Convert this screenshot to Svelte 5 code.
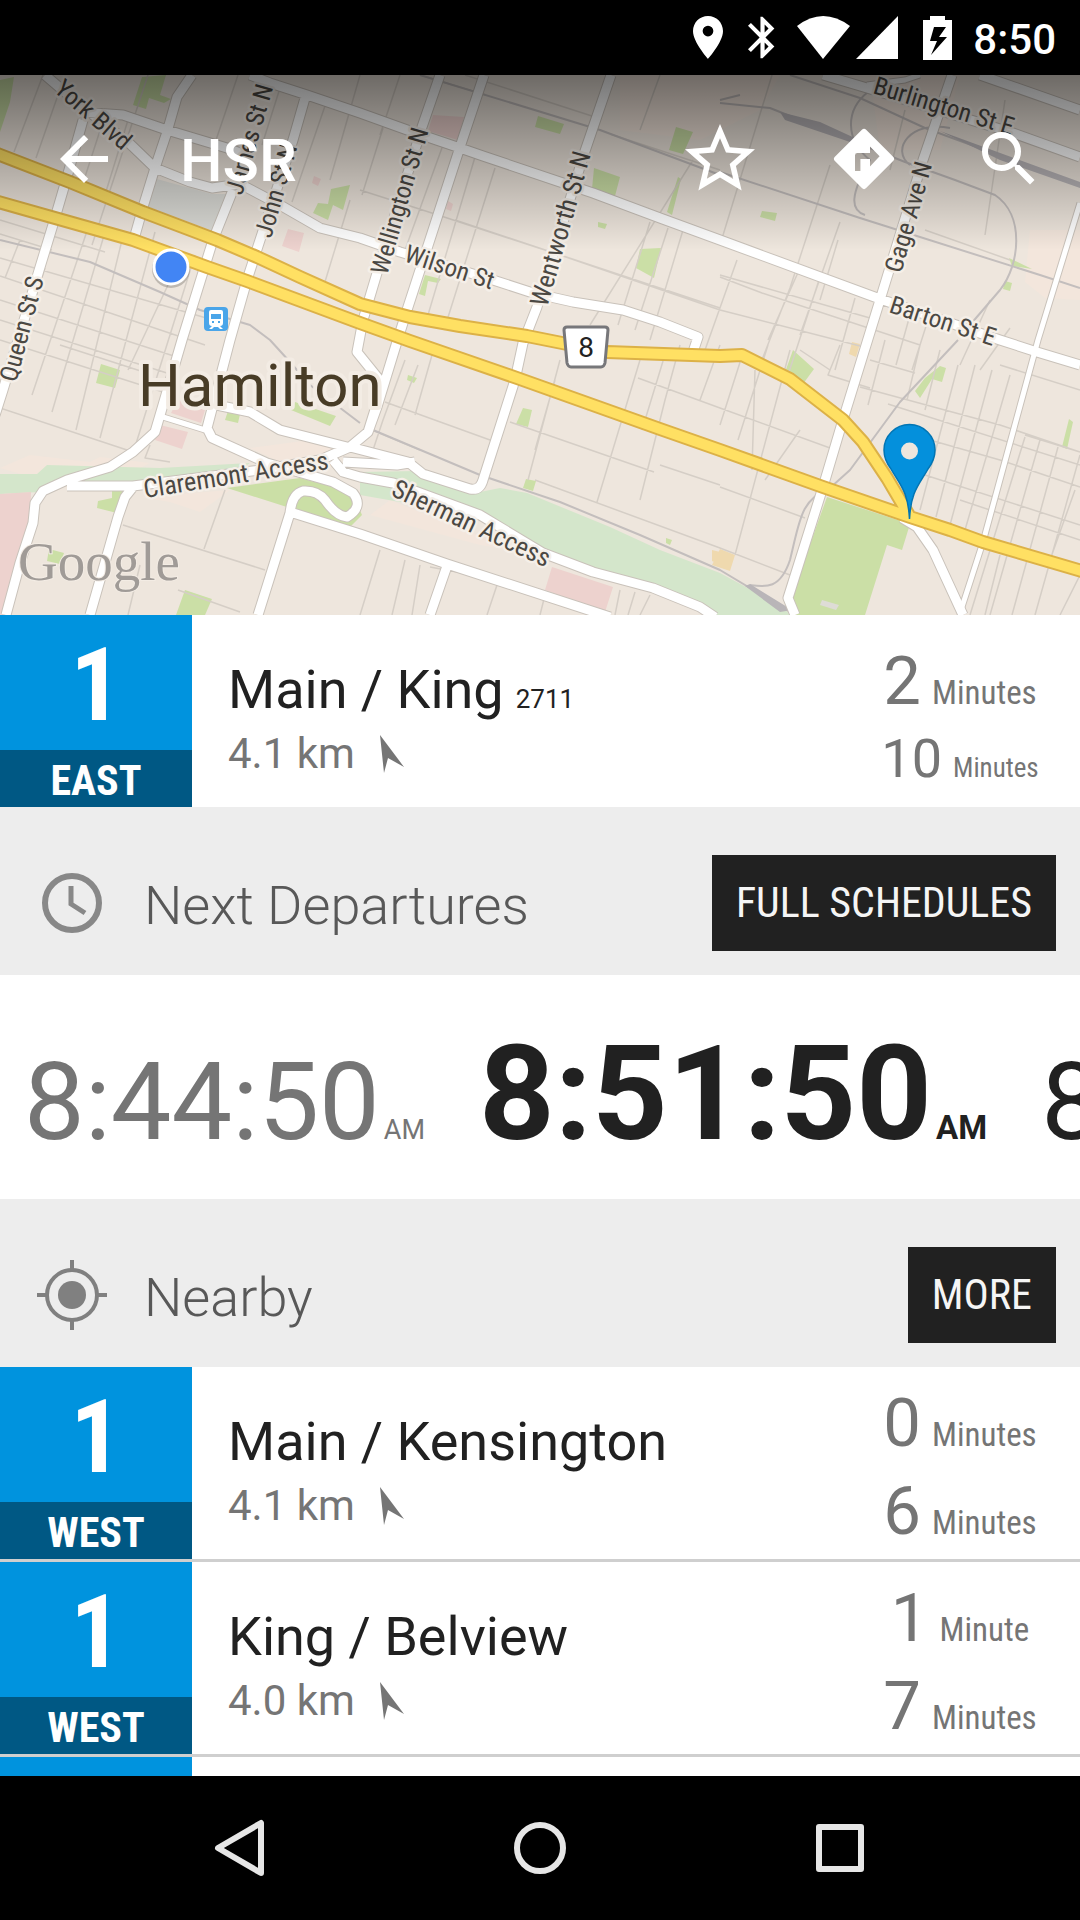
<script>
  const stop = { route: '1', heading: 'EAST', name: 'Main / King', code: '2711', distance: '4.1 km' }
  const arrivals = [
    { count: 2, unit: 'Minutes' },
    { count: 10, unit: 'Minutes', small: true }
  ]

  const departures = [
    { time: '8:44:50', state: 'past' },
    { time: '8:51:50', state: 'next' },
    { time: '8:58:50', state: 'later' }
  ]

  const nearby = [
    {
      route: '1',
      heading: 'WEST',
      name: 'Main / Kensington',
      distance: '4.1 km',
      arrivals: [{ count: 0, unit: 'Minutes' }, { count: 6, unit: 'Minutes' }]
    },
    {
      route: '1',
      heading: 'WEST',
      name: 'King / Belview',
      distance: '4.0 km',
      arrivals: [{ count: 1, unit: 'Minute' }, { count: 7, unit: 'Minutes' }]
    },
    { route: '', heading: '', name: '', distance: '', arrivals: [] }
  ]

  // map layers, drawn bottom to top
  const ravine = [
    'M0 474H37L47 465L160 468L250 463L230 476L140 482L67 484L40 492L0 494Z',
    'M360 472L417 471L480 492L500 488L527 493L610 527L660 550L720 573L783 607L790 615H710L653 588L573 563L480 517L400 502L360 495Z'
  ]
  const parks = [
    'M827 497L910 524L902 550L887 545L865 615H795L790 600Z',
    'M227 488L300 478L352 492L362 515L350 527L290 508Z',
    'M0 80L14 77L10 102L0 132Z',
    'M142 77L166 75L160 95L171 99L164 103L149 98L146 109L133 105Z',
    'M331 189L350 185L343 210L333 205L328 220L313 213L318 203L328 204Z',
    'M538 116L564 124L560 134L535 127Z',
    'M594 168L620 177L615 196L592 189Z',
    'M676 127L693 132L683 154L669 150Z',
    'M678 177L681 179L672 215L667 212Z',
    'M640 249L661 248L654 278L636 268Z',
    'M425 275L441 279L438 283L428 281L425 296L419 294Z',
    'M762 211L777 213L775 221L760 217Z',
    'M1009 258L1032 269L1012 266Z',
    'M1005 281L1012 283L1010 291L1003 289Z',
    'M101 364L120 370L115 388L96 383Z',
    'M228 411L240 414L238 423L225 420Z',
    'M295 402L336 416L330 426L291 410Z',
    'M112 490L123 491L117 513L97 508L98 501L112 498Z',
    'M49 549L64 553L60 564L47 561Z',
    'M185 590L212 599L205 615H176Z',
    'M523 408L532 410L528 427L516 424Z',
    'M526 479L536 481L533 491L523 488Z',
    'M793 350L814 369L803 384L784 375Z',
    'M940 366L946 368L942 382L932 379L920 398L915 391L925 378Z',
    'M1069 419L1073 422L1067 449L1062 447Z',
    'M408 375L417 378L414 383L407 380Z',
    'M598 222L607 224L605 229L598 227Z',
    'M666 538L672 540L670 545L666 543Z'
  ]
  const civic = [
    'M0 494L31 492L30 530L7 615H0Z',
    'M552 567L613 587L605 612L545 590Z',
    'M433 115L464 117L458 140L428 131Z',
    'M288 229L304 233L299 252L282 246Z',
    'M178 400L205 410L201 423L171 413Z',
    'M160 425L188 432L182 449L155 440Z',
    'M314 176L321 179L318 186L312 183Z',
    'M448 201L453 204L451 211L446 209Z'
  ]
  const sandy = ['M852 342L860 344L856 357L849 354Z', 'M720 549L735 555L730 571L712 565Z', 'M712 550L720 552V565L712 561Z']
  const pale = [
    'M620 75H780L760 110L700 140L620 130Z',
    'M870 75H960L940 150L880 150Z',
    'M1030 230H1080V300L1045 298L1025 282Z',
    'M0 468L30 455L90 462L100 457L150 463L140 468L47 467L35 478Z',
    'M250 448L310 440L340 450L280 462Z',
    'M140 497L230 490L200 512L170 502Z',
    'M370 515L390 500L520 552L480 545Z'
  ]
  const streets = [
    'M43 75L14 152M65 75L36 158M88 100L58 192M106 112L84 180M128 120L104 198M148 75L92 245M238 75L216 140M280 88L262 145M326 103L292 202M350 200L324 285M400 75L380 135',
    'M0 220L105 252M0 234L52 250M0 258L220 322M0 276L205 345M0 300L180 358M0 320L170 374M0 340L163 392M60 345L150 374M0 408L127 450',
    'M20 240L5 278M45 268L30 315M88 228L32 395M105 232L52 412M122 240L76 430M155 232L100 438M195 255L134 450M168 285L128 370',
    'M360 190L435 214L560 255L720 310L860 346M360 75L330 180M383 128L362 195M415 148L385 255M443 145L405 250M475 157L425 325M495 168L444 330M455 220L720 308',
    'M465 75L595 117M420 75L486 95M610 134L720 170M660 75L640 130M693 160L590 325M650 222L618 325M668 228L635 330M683 230L650 340M737 260L705 350M800 268L768 340M820 277L788 375M720 275L870 318M720 245L772 75',
    'M720 277L762 293L920 345M840 222L800 335M838 240L820 300M855 298L835 370M910 315L896 365M928 320L912 370M990 300L960 365M1010 328L980 370M830 165L790 288L758 370M1005 100L985 235M905 110L890 170M925 230L1010 260',
    'M405 360L383 420L373 450M418 365L395 425M432 355L415 415M385 402L490 440M372 430L420 450M560 360L528 480M510 422L654 472M555 380L535 450M640 360L597 502M680 345L665 400L640 500M667 348L642 430M638 378L720 408M660 465L720 485M535 480L720 548M700 400L720 345',
    'M790 350L735 555M768 345L738 440M720 408L830 448M720 487L805 518M720 548L790 575M742 356L720 425M840 345L828 375L870 388M755 370L752 470M800 430L765 480M830 370L800 350',
    'M870 360L915 373M860 387L1000 425L1080 452M888 404L1080 465M930 440L1000 460L1080 487M925 475L1080 525M960 500L1080 540M1000 365L1080 390M920 345L907 400M940 350L925 410M958 365L920 510M975 365L936 517M992 370L950 525M1010 375L965 530',
    'M1025 437L970 615M1040 440L990 615M1058 447L1012 615M1080 455L1035 615M1075 490L1050 560M1080 575L1060 615M1000 555L985 615M1025 435L1080 452M885 340L868 405',
    'M150 445L145 458L170 462M225 490L204 549M123 525L265 570M140 565L128 615M178 590L240 612M380 550L360 615M405 560L392 615M420 565L412 615M430 567L500 580M497 585L487 615M545 595L540 615M620 590L615 615M635 592L628 615M650 595L640 615'
  ]
  const rails = [
    'M790 75L860 98L925 128L1080 185M720 103L770 108L850 140L905 162L955 180L995 195C1025 215 1020 265 1000 290L970 325',
    'M720 172L860 218L1040 275L1080 288M868 92C845 110 845 140 870 160C850 195 850 210 865 215M950 128C910 120 890 150 910 165',
    'M0 240L90 262L160 292L200 310L250 325L270 340L290 362L310 385L360 423M373 430L480 475L560 502L640 535L720 570L790 612',
    'M958 340L900 402L850 470L830 488C800 500 800 520 790 560C780 590 765 587 750 585',
    'M420 75L600 130L720 175M740 95L720 100'
  ]
  const yards = ['M780 112L820 122L870 145L850 142L785 120Z', 'M940 131L1080 182V188L1000 160Z', 'M750 584L792 610L780 612L745 586Z']
  const roads = [
    'M45 75L80 105L128 142L155 168L190 182L212 188L240 184L280 205L320 228L360 238L400 252L493 280L533 293L573 302L623 310L660 322L698 337L692 355',
    'M80 112L123 115L167 130L227 148L245 155',
    'M250 75L270 83L307 95L360 113L410 131L460 148L483 156L560 182L593 193L660 218L720 240L880 299L1000 340L1037 352L1080 365',
    'M83 120L67 177L55 218L37 277L3 390L-5 415',
    'M192 75L177 97L167 132L155 168L143 207L134 239',
    'M233 190L213 240L182 340L163 405L155 432L133 452L110 467L67 480L43 491L35 503L33 523L20 563L6 615',
    'M305 98L293 140L260 240L247 280L230 340L207 428L212 438L267 463L333 482L353 493Q364 507 347 517Q336 516 325 500Q317 490 303 491Q292 494 290 513L258 615',
    'M207 403L250 412L280 430L347 447',
    'M67 486H133L260 470L320 460L350 447L368 432L378 400V378L357 352L363 320L377 273L422 127L440 75',
    'M133 487L125 497L118 517L90 615',
    'M484 75L460 147L408 307L396 345L377 407L368 432',
    'M611 75L583 157L537 307L523 343L515 380L483 480Q480 491 470 489L423 474L408 462L350 447',
    'M333 460L343 472L360 477L393 483L480 515L543 553L593 572L653 588L700 607L715 617',
    'M343 462L397 465L415 462',
    'M290 512L360 534L447 564L610 617M447 566L430 615',
    'M952 75L923 160L880 300L842 423L823 487L788 598L795 615',
    'M823 75L867 88L1013 133L1080 157M980 75L1080 110',
    'M902 518L917 527L933 550L963 615'
  ]
  const lanes = ['M163 417L205 430', 'M1080 203L1038 340L983 542L961 610', 'M867 85L905 80L920 75']
  const highways = [
    'M-5 153L70 182L143 212L217 240L257 257L300 277L360 304L410 317L460 326L527 336L607 352L720 356L742 355L790 379L843 420L863 442L887 478L910 517',
    'M-5 201L55 218L133 240L207 267L247 281L360 323L410 341L517 378L660 429L720 450L823 487L910 517L950 530L983 542L1085 572'
  ]
  const labels = [
    { text: 'York Blvd', x: 53, y: 91, angle: 41 },
    { text: 'James St N', x: 242, y: 196, angle: -74 },
    { text: 'John St N', x: 271, y: 239, angle: -74 },
    { text: 'Wellington St N', x: 387, y: 276, angle: -74 },
    { text: 'Wentworth St N', x: 547, y: 308, angle: -74, large: true },
    { text: 'Queen St S', x: 16, y: 383, angle: -75 },
    { text: 'Wilson St', x: 403, y: 261, angle: 18 },
    { text: 'Gage Ave N', x: 901, y: 274, angle: -74 },
    { text: 'Barton St E', x: 888, y: 312, angle: 18 },
    { text: 'Burlington St E', x: 872, y: 93, angle: 17 },
    { text: 'Claremont Access', x: 145, y: 498, angle: -9, large: true },
    { text: 'Sherman Access', x: 390, y: 495, angle: 25, large: true }
  ]
</script>

{#snippet stopRow(item, times)}
  <div class="stop">
    <div class="badge">
      <span class="route">{item.route}</span>
      <span class="heading">{item.heading}</span>
    </div>
    <div class="place">
      <div class="name">{item.name}{#if item.code}<small>{item.code}</small>{/if}</div>
      {#if item.distance}
        <div class="distance">
          {item.distance}
          <svg width="24" height="38" viewBox="0 0 24 38" aria-hidden="true"><path d="M0 0L24 32L8 23L4 38Z" /></svg>
        </div>
      {/if}
    </div>
    <div class="times">
      {#each times as t}
        <div class="wait" class:small={t.small}><b>{t.count}</b><span>{t.unit}</span></div>
      {/each}
    </div>
  </div>
{/snippet}

<div class="screen">
  <div class="status">
    <svg width="30" height="43" viewBox="5 2 14 20"><path d="M12 2C8.100 2 5 5.100 5 9c0 5.200 7 13 7 13s7-7.800 7-13c0-3.900-3.100-7-7-7zm0 9.500a2.500 2.500 0 1 1 0-5 2.500 2.500 0 0 1 0 5z" /></svg>
    <svg class="bluetooth" width="27" height="43" viewBox="5 2 13 20"><path d="M17.700 7.700L12 2h-1v7.600L6.400 5 5 6.400l5.600 5.600L5 17.600 6.400 19l4.600-4.600V22h1l5.700-5.700-4.300-4.300 4.300-4.300zM13 5.800l1.900 1.900L13 9.600V5.800zm1.900 10.500L13 18.200v-3.800l1.900 1.900z" /></svg>
    <svg class="wifi" width="53" height="43" viewBox="0 0 53 43"><path d="M0 10Q26 -10 53 10L26 43Z" /></svg>
    <svg class="signal" width="42" height="43" viewBox="0 0 42 43"><path d="M42 0V43H0Z" /></svg>
    <svg class="battery" width="29" height="44" viewBox="0 0 29 44"><path fill-rule="evenodd" d="M7 0h15v4h7v40H0V4h7zM11 11L7 25h7L8 39 24 21h-8l7-10z" /></svg>
    <span>8:50</span>
  </div>

  <div class="map">
    <svg class="tiles" viewBox="0 75 1080 540" preserveAspectRatio="xMidYMin slice" role="img" aria-label="Map of Hamilton">
      <defs>
        <linearGradient id="shade" x1="0" y1="0" x2="0" y2="1">
          <stop offset="0" stop-color="#000" stop-opacity="0.54" />
          <stop offset="1" stop-color="#000" stop-opacity="0" />
        </linearGradient>
      </defs>
      <rect y="75" width="1080" height="540" fill="#eee6dd" />
      <path d={pale.join('')} fill="#f3e6dc" />
      <path d="M153 178L212 194L230 194L213 231L143 205Z" fill="#dcdcd7" />
      <path d={ravine.join('')} fill="#d4e6cb" />
      <path d={civic.join('')} fill="#edd2ce" />
      <path d={sandy.join('')} fill="#efd9ae" />
      <path d={parks.join('')} fill="#cbdfa6" />
      <path d="M822 600L839 605L836 610L820 605Z" fill="#dedcd6" />
      <path class="line" d={streets.join('')} stroke="#d5cec6" stroke-width="1.500" />
      <path class="line" d={rails.join('')} stroke="#c3bebd" stroke-width="2" />
      <path d={yards.join('')} fill="#b9b5b8" />
      <path class="line" d={roads.join('')} stroke="#c9c2ba" stroke-width="11" />
      <path class="line" d={lanes.join('')} stroke="#c9c2ba" stroke-width="7" />
      <path class="line" d={lanes.join('')} stroke="#fff" stroke-width="5" />
      <path class="line" d={roads.join('')} stroke="#fff" stroke-width="9" />
      <path class="line" d={highways.join('')} stroke="#dcb147" stroke-width="14" />
      <path class="line" d={highways.join('')} stroke="#ffe063" stroke-width="10" />

      <g class="labels">
        {#each labels as l}
          <text class:large={l.large} transform="translate({l.x} {l.y}) rotate({l.angle})">{l.text}</text>
        {/each}
      </g>
      <text class="city" x="138" y="406">Hamilton</text>
      <text class="google" x="18" y="580">Google</text>

      <path d="M567 327h38q3 0 3 3l-3 33q-1 4-4 4h-30q-3 0-4-4l-3-33q0-3 3-3z" fill="#fff" stroke="#77777a" stroke-width="3" />
      <text class="shield" x="586" y="357">8</text>

      <rect x="204" y="307" width="24" height="24" rx="4" fill="#4aa5e9" />
      <path d="M211 310h10q2 0 2 2v11q0 3-3 3l3 3h-3l-2-2h-4l-2 2h-3l3-3q-3 0-3-3v-11q0-2 2-2zm0 4v5h10v-5zm1 7v2h2v-2zm6 0v2h2v-2z" fill="#fff" fill-rule="evenodd" />

      <rect y="75" width="1080" height="175" fill="url(#shade)" />
      <circle cx="171" cy="269" r="19" fill="#000" fill-opacity="0.200" />
      <circle cx="171" cy="267" r="17" fill="#4285f4" stroke="#fff" stroke-width="3" />
      <path d="M909.500 519C908 491 900 485 891 469C885 461 884 456 884 450a25.500 25.500 0 0 1 51 0C935 456 934 461 928 469C919 485 911 491 909.500 519Z" fill="#0490dc" stroke="#0275b4" stroke-width="1.500" />
      <circle cx="909.500" cy="451" r="8.500" fill="#eee6dd" />
    </svg>

    <header class="toolbar">
      <button type="button" aria-label="Back">
        <svg width="72" height="72" viewBox="0 0 24 24"><path d="M20 11H7.830l5.590-5.590L12 4l-8 8 8 8 1.410-1.410L7.830 13H20v-2z" /></svg>
      </button>
      <h1>HSR</h1>
      <button type="button" aria-label="Favourite">
        <svg width="84" height="84" viewBox="0 0 24 24"><path d="M22 9.240l-7.190-.62L12 2 9.190 8.630 2 9.240l5.460 4.730L5.820 21 12 17.270 18.180 21l-1.630-7.030L22 9.240zM12 15.400l-3.760 2.270 1-4.280-3.320-2.880 4.380-.38L12 6.100l1.710 4.040 4.380.38-3.320 2.880 1 4.280L12 15.400z" /></svg>
      </button>
      <button type="button" aria-label="Directions">
        <svg width="72" height="72" viewBox="0 0 24 24"><path d="M21.710 11.290l-9-9a1 1 0 0 0-1.410 0l-9 9a1 1 0 0 0 0 1.410l9 9a1 1 0 0 0 1.410 0l9-9a1 1 0 0 0 0-1.410zM14 14.500V12h-3.200v4H9v-5.200q0-.8.800-.8H14V7.800l3.200 3.300z" /></svg>
      </button>
      <button type="button" aria-label="Search">
        <svg width="72" height="72" viewBox="0 0 24 24"><path d="M15.500 14h-.79l-.28-.27A6.470 6.470 0 0 0 16 9.500 6.500 6.500 0 1 0 9.500 16c1.610 0 3.090-.59 4.230-1.570l.27.28v.79l5 4.990L20.490 19l-4.990-5zm-6 0C7.010 14 5 11.990 5 9.500S7.010 5 9.500 5 14 7.010 14 9.500 11.990 14 9.500 14z" /></svg>
      </button>
    </header>
  </div>

  <main>
    {@render stopRow(stop, arrivals)}

    <div class="section">
      <svg width="72" height="72" viewBox="0 0 72 72" aria-hidden="true">
        <circle cx="36" cy="36" r="27" fill="none" stroke="#888" stroke-width="6" />
        <path d="M35 19V37L49 46" fill="none" stroke="#888" stroke-width="5" />
      </svg>
      <h2>Next Departures</h2>
      <button type="button">FULL SCHEDULES</button>
    </div>

    <div class="departures">
      {#each departures as d}
        <div class="departure {d.state}">{d.time}<small>AM</small></div>
      {/each}
    </div>

    <div class="section">
      <svg width="72" height="72" viewBox="0 0 72 72" aria-hidden="true">
        <circle cx="36" cy="36" r="25" fill="none" stroke="#808080" stroke-width="4" />
        <circle cx="36" cy="36" r="14" fill="#808080" />
        <path d="M36 1V11M36 61V71M1 36H11M61 36H71" stroke="#808080" stroke-width="4" />
      </svg>
      <h2>Nearby</h2>
      <button type="button">MORE</button>
    </div>

    <div class="nearby">
      {#each nearby as item}
        {@render stopRow(item, item.arrivals)}
      {/each}
    </div>
  </main>

  <nav>
    <button type="button" aria-label="Back">
      <svg width="60" height="60" viewBox="0 0 60 60"><path d="M51 5V55L8 30Z" /></svg>
    </button>
    <button type="button" aria-label="Home">
      <svg width="60" height="60" viewBox="0 0 60 60"><circle cx="30" cy="30" r="23" /></svg>
    </button>
    <button type="button" aria-label="Recent apps">
      <svg width="60" height="60" viewBox="0 0 60 60"><rect x="9" y="9" width="42" height="42" /></svg>
    </button>
  </nav>
</div>

<style>
  :global(body) {
    margin: 0;
    background: #000;
  }

  .screen {
    display: flex;
    flex-direction: column;
    height: 100vh;
    overflow: hidden;
    font-family: Roboto, sans-serif;
    color: #212121;
    background: #fff;
  }

  button {
    border: 0;
    padding: 0;
    background: none;
    font-family: inherit;
    cursor: pointer;
  }

  svg {
    display: block;
    flex: none;
  }

  .status {
    display: flex;
    flex: none;
    align-items: center;
    justify-content: flex-end;
    height: 75px;
    padding-right: 24px;
    background: #000;
    color: #fff;
    fill: #fff;
    font-size: 42px;
    font-weight: 500;
  }

  .status span {
    margin-left: 21px;
    line-height: 48px;
    padding-top: 4px;
  }

  .bluetooth {
    margin-left: 25px;
  }

  .wifi {
    margin-left: 22px;
  }

  .signal {
    margin-left: 6px;
  }

  .battery {
    margin-left: 25px;
  }

  .map {
    display: grid;
    flex: none;
    height: 540px;
    overflow: hidden;
  }

  .tiles,
  .toolbar {
    grid-area: 1 / 1;
  }

  .tiles {
    width: 100%;
    height: 540px;
  }

  .line {
    fill: none;
    stroke-linejoin: round;
  }

  .labels text {
    font-family: 'Roboto Condensed', Roboto, sans-serif;
    font-size: 25px;
    fill: #4b4843;
    stroke: #f5efe8;
    stroke-width: 5px;
    stroke-linejoin: round;
    paint-order: stroke;
  }

  .labels .large {
    font-size: 26px;
  }

  .city {
    font-size: 60px;
    fill: #483c26;
    stroke: #f3ece4;
    stroke-width: 8px;
    stroke-linejoin: round;
    paint-order: stroke;
  }

  .google {
    font-family: 'Liberation Serif', serif;
    font-size: 55px;
    fill: #a09b97;
    stroke: #f3ece4;
    stroke-width: 2px;
    paint-order: stroke;
  }

  .shield {
    font-size: 28px;
    text-anchor: middle;
    fill: #222;
  }

  .toolbar {
    display: flex;
    align-items: center;
    height: 168px;
    padding: 0 35px 0 48px;
    z-index: 1;
    fill: #fff;
  }

  h1 {
    flex: 1;
    margin: 0 0 0 60px;
    color: #fff;
    font-size: 60px;
    font-weight: 500;
    line-height: 68px;
    padding-top: 4px;
  }

  .toolbar button + button {
    margin-left: 66px;
  }

  .toolbar button:last-child {
    margin-left: 73px;
  }

  main {
    flex: 1;
    min-height: 0;
    overflow: hidden;
  }

  .stop {
    display: flex;
    height: 192px;
    background: #fff;
  }

  .nearby .stop {
    border-bottom: 3px solid #cfcfcf;
  }

  .badge {
    display: flex;
    flex-direction: column;
    flex: none;
    width: 192px;
    background: #0093de;
    color: #fff;
    text-align: center;
    font-family: 'Roboto Condensed', Roboto, sans-serif;
    font-weight: 700;
  }

  .route {
    height: 135px;
    font-size: 102px;
    line-height: 140px;
  }

  .heading {
    height: 57px;
    background: #005884;
    font-size: 42px;
    line-height: 62px;
  }

  .place {
    flex: 1;
    min-width: 0;
    padding: 43px 0 0 36px;
    white-space: nowrap;
  }

  .name {
    display: flex;
    align-items: baseline;
    gap: 12px;
    font-size: 54px;
    line-height: 64px;
  }

  .name small {
    font-size: 26px;
    line-height: 32px;
  }

  .distance {
    display: flex;
    align-items: center;
    gap: 25px;
    color: #757575;
    fill: #757575;
    font-size: 42px;
    line-height: 64px;
  }

  .times {
    display: flex;
    flex-direction: column;
    flex: none;
    align-items: center;
    justify-content: center;
    gap: 8px;
    width: 240px;
    padding-top: 8px;
    box-sizing: border-box;
    color: #757575;
  }

  .wait {
    display: flex;
    align-items: baseline;
    gap: 11px;
    font-family: 'Roboto Condensed', Roboto, sans-serif;
    font-size: 33px;
    line-height: 40px;
  }

  .wait b {
    font-family: Roboto, sans-serif;
    font-size: 67px;
    font-weight: 400;
    line-height: 80px;
  }

  .wait.small {
    font-size: 27px;
    line-height: 32px;
  }

  .wait.small b {
    font-size: 54px;
    line-height: 60px;
  }

  .section {
    display: flex;
    align-items: center;
    padding: 48px 24px 24px 36px;
    background: #ededed;
  }

  h2 {
    flex: 1;
    margin: 0 0 0 36px;
    padding-top: 6px;
    color: #585858;
    font-size: 54px;
    font-weight: 300;
    line-height: 64px;
  }

  .section button {
    height: 96px;
    padding: 0 24px 2px;
    background: #212121;
    color: #f5f5f5;
    font-family: 'Roboto Condensed', Roboto, sans-serif;
    font-size: 42px;
  }

  .departures {
    display: flex;
    align-items: baseline;
    gap: 54px;
    height: 224px;
    padding: 44px 0 0 24px;
    box-sizing: border-box;
    overflow: hidden;
    white-space: nowrap;
  }

  .departure {
    flex: none;
    font-size: 108px;
    line-height: 150px;
  }

  .departure small {
    margin-left: 4px;
    font-size: 27px;
  }

  .past {
    color: #757575;
  }

  .next {
    font-size: 132px;
    font-weight: 700;
  }

  .next small {
    font-size: 33px;
  }

  nav {
    display: flex;
    flex: none;
    align-items: center;
    justify-content: center;
    gap: 240px;
    height: 144px;
    background: #000;
  }

  nav svg {
    fill: none;
    stroke: #e6e6e6;
    stroke-width: 6px;
    stroke-linejoin: round;
  }
</style>
